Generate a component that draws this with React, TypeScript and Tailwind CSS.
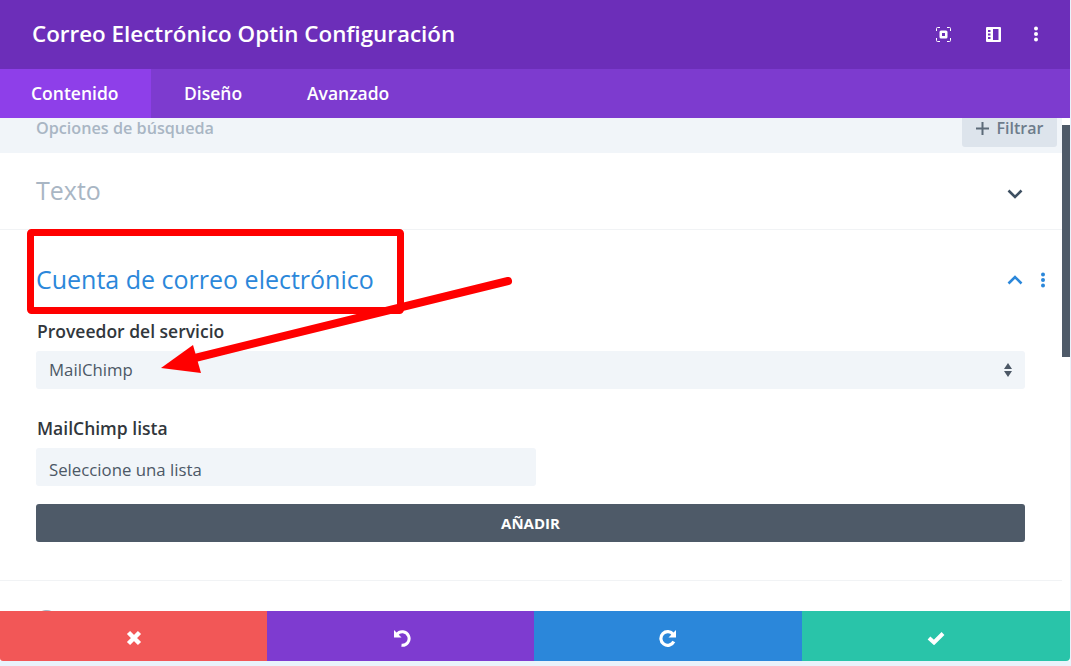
const Title = ({ text, color }: { text: string; color: string }) => (
    <div className={`text-[25px] leading-[30px] ${color}`}>{text}</div>
)

const Dots = ({ className }: { className: string }) => (
    <svg width="6" height="16" viewBox="0 0 6 16" className={className}>
        <circle cx="3" cy="2.500" r="2" />
        <circle cx="3" cy="8" r="2" />
        <circle cx="3" cy="13.500" r="2" />
    </svg>
)

const App = () => {
    return (
        <div className="relative w-[1071px] h-[666px] overflow-hidden bg-[#e9f3fb] font-['Open_Sans',sans-serif]">
            <div className="w-[1070px] h-[661px] bg-white overflow-hidden">
                {/* header */}
                <div className="h-[69px] bg-[#6c2eb9] flex items-center justify-between pl-[32px] pr-[31px]">
                    <span className="text-[22.400px] font-semibold text-white -mt-[2px]">Correo Electrónico Optin Configuración</span>
                    <div className="flex items-center -mt-[1px]">
                        <svg width="15" height="15" viewBox="0 0 15 15" fill="none" stroke="white" className="mr-[35px]">
                            <path d="M.500 4V1.500a1 1 0 0 1 1-1H4M11 .500h2.500a1 1 0 0 1 1 1V4M14.500 11v2.500a1 1 0 0 1-1 1H11M4 14.500H1.500a1 1 0 0 1-1-1V11" />
                            <rect x="3.500" y="3.500" width="8" height="8" rx="1.500" fill="white" stroke="none" />
                            <rect x="6" y="6" width="3" height="3" fill="#6c2eb9" stroke="none" />
                        </svg>
                        <svg width="15" height="15" viewBox="0 0 15 15" className="mr-[32px]">
                            <path fillRule="evenodd" fill="white" d="M1 0h13a1 1 0 0 1 1 1v13a1 1 0 0 1-1 1H1a1 1 0 0 1-1-1V1a1 1 0 0 1 1-1Zm1 3v2h2.500V3Zm0 3.500v2h2.500v-2Zm0 3.500v2h2.500v-2ZM7 2v11h5.500V2Z" />
                        </svg>
                        <Dots className="fill-white" />
                    </div>
                </div>

                {/* tabs */}
                <div className="h-[49px] bg-[#7d3bcf] flex text-[17.500px] font-semibold text-white">
                    <div className="w-[151px] bg-[#8e3fe9] pl-[31px] flex items-center">Contenido</div>
                    <div className="w-[124px] pl-[33px] flex items-center">Diseño</div>
                    <div className="pl-[32px] flex items-center">Avanzado</div>
                </div>

                <div className="flex">
                    <div className="w-[1062px]">
                        {/* search */}
                        <div className="h-[35px] bg-[#f1f5f9] flex justify-between pl-[36px] pr-[5px]">
                            <span className="text-[16.200px] font-semibold text-[#a9b6c4] leading-[20px]">Opciones de búsqueda</span>
                            <div className="w-[95px] h-[29px] bg-[#dde4ec] rounded-b-[3px] flex justify-center gap-[8px] text-[#6d7c8b] text-[16px] font-semibold leading-[20px]">
                                <svg width="13" height="13" viewBox="0 0 13 13" fill="#5d6b79" className="mt-[4px]">
                                    <path d="M5.500 0h2v5.500H13v2H7.500V13h-2V7.500H0v-2h5.500Z" />
                                </svg>
                                Filtrar
                            </div>
                        </div>

                        {/* Texto */}
                        <div className="h-[77px] border-b border-[#f1f3f5] flex justify-between pt-[22px] pl-[36px] pr-[39px]">
                            <Title text="Texto" color="text-[#a9b6c4]" />
                            <svg width="16" height="10" viewBox="0 0 16 10" fill="none" stroke="#3e5062" strokeWidth="2.600" className="mt-[14px]">
                                <path d="M1.500 1.500 8 8l6.500-6.500" />
                            </svg>
                        </div>

                        {/* Cuenta */}
                        <div className="h-[351px] border-b border-[#f1f3f5] pl-[36px] pr-[37px]">
                            <div className="h-[86px] pt-[34px] flex justify-between">
                                <Title text="Cuenta de correo electrónico" color="text-[#2b87da]" />
                                <div className="flex items-start gap-[17px] pt-[8px] -mr-[21px]">
                                    <svg width="16" height="10" viewBox="0 0 16 10" fill="none" stroke="#2b87da" strokeWidth="2.600" className="mt-[3px]">
                                        <path d="M1.500 8.500 8 2l6.500 6.500" />
                                    </svg>
                                    <Dots className="fill-[#2b87da]" />
                                </div>
                            </div>
                            <div className="pl-[1px] text-[17.500px] font-semibold text-[#32373c] leading-[22px] pt-[4px]">Proveedor del servicio</div>
                            <div className="mt-[9px] h-[38px] bg-[#f1f5f9] rounded-[3px] flex items-center justify-between px-[13px] text-[#4c5866] text-[16.800px] font-medium">
                                MailChimp
                                <svg width="8" height="16" viewBox="0 0 8 16" fill="#4c5866">
                                    <path d="M4 1 8 7H0ZM4 15 0 9h8Z" />
                                </svg>
                            </div>
                            <div className="mt-[28px] pl-[1px] text-[17.500px] font-semibold text-[#32373c] leading-[22px]">MailChimp lista</div>
                            <div className="mt-[9px] w-[500px] h-[38px] bg-[#f1f5f9] rounded-[3px] flex items-center pl-[13px] pt-[5px] text-[#4c5866] text-[16.800px] font-medium">Seleccione una lista</div>
                            <div className="mt-[18px] h-[38px] bg-[#4e5a68] rounded-[3px] flex items-center justify-center text-white text-[15px] font-bold">AÑADIR</div>
                        </div>

                        {/* next section, mostly under the action bar */}
                        <div className="pt-[22px] pl-[36px]">
                            <Title text="Campos" color="text-[#a9b6c4]" />
                        </div>
                    </div>
                    {/* scrollbar */}
                    <div className="pt-[7px]">
                        <div className="w-[8px] h-[232px] bg-[#4e5a68]" />
                    </div>
                </div>
            </div>

            {/* action bar */}
            <div className="absolute left-0 top-[611px] w-[1070px] h-[50px] flex">
                <div className="w-[267px] pt-[3px] bg-[#f25757] rounded-bl-[3px] flex items-center justify-center">
                    <svg width="16" height="16" viewBox="0 0 16 16" fill="none" stroke="white" strokeWidth="4.500">
                        <path d="M2.500 2.500l11 11M13.500 2.500l-11 11" />
                    </svg>
                </div>
                <div className="w-[267px] pt-[3px] pl-[2px] bg-[#7e3bd0] flex items-center justify-center">
                    <svg width="18" height="18" viewBox="0 0 18 18" fill="none" stroke="white" strokeWidth="3">
                        <path d="M3.800 5.500A6.800 6.800 0 1 1 8.500 16.300" />
                        <path d="M1 1v7.500h7.500z" fill="white" stroke="none" />
                    </svg>
                </div>
                <div className="w-[268px] pt-[3px] bg-[#2b87da] flex items-center justify-center">
                    <svg width="18" height="18" viewBox="0 0 18 18" fill="none" stroke="white" strokeWidth="3.200">
                        <path d="M14.200 5.500A6.800 6.800 0 1 0 14.800 12.500" />
                        <path d="M17 1v7.500H9.500z" fill="white" stroke="none" />
                    </svg>
                </div>
                <div className="flex-1 pt-[3px] bg-[#29c4a9] rounded-br-[4px] flex items-center justify-center">
                    <svg width="18" height="14" viewBox="0 0 18 14" fill="none" stroke="white" strokeWidth="4">
                        <path d="M2 7l5 4.500L16 2.500" />
                    </svg>
                </div>
            </div>

            {/* red annotation */}
            <svg width="1071" height="666" className="absolute inset-0 pointer-events-none">
                <rect x="30.500" y="232.500" width="370" height="78" rx="1" fill="none" stroke="#ff0000" strokeWidth="7" />
                <path d="M508 281 195 358" stroke="#ff0000" strokeWidth="8" strokeLinecap="round" />
                <path d="M161 368 193 345 201 373Z" fill="#ff0000" />
            </svg>
        </div>
    )
}

export default App;
